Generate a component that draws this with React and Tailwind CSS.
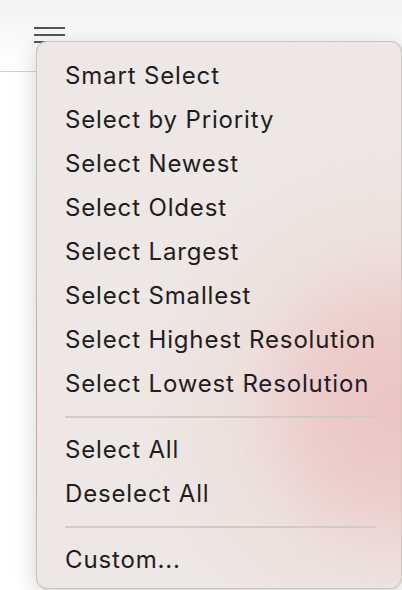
const items1 = [
  'Smart Select',
  'Select by Priority',
  'Select Newest',
  'Select Oldest',
  'Select Largest',
  'Select Smallest',
  'Select Highest Resolution',
  'Select Lowest Resolution',
]

const items2 = ['Select All', 'Deselect All']

function Item({ label }) {
  return (
    <div className="h-[44px] flex items-center px-[28px] text-[24px] text-[#1f1d1d] tracking-[0.85px] leading-none whitespace-nowrap">
      {label}
    </div>
  )
}

function Separator() {
  return (
    <div className="h-[22px] flex items-center pl-[28px] pr-[25px]">
      <div className="h-[2px] w-full bg-[#d4c9c7]" />
    </div>
  )
}

export default function App() {
  return (
    <div className="relative w-[402px] h-[590px] overflow-hidden bg-white" style={{ fontFamily: 'Inter, "Noto Sans", sans-serif' }}>
      <div className="h-[72px] border-b border-[#d2d2d2] bg-gradient-to-b from-[#f3f3f3] to-white">
        <div className="pl-[34px] pt-[27px] flex flex-col gap-[5px]">
          <div className="h-[2px] w-[31px] bg-[#555]" />
          <div className="h-[2px] w-[31px] bg-[#555]" />
          <div className="h-[2px] w-[31px] bg-[#555]" />
        </div>
      </div>

      <div className="absolute left-[36px] top-[41px] w-[366px] h-[548px] rounded-[11px] border border-black/15 bg-[#ede8e5] bg-[radial-gradient(ellipse_72%_50%_at_98%_67%,rgba(235,196,196,1)_0%,rgba(236,200,199,0.85)_30%,rgba(237,216,214,0.45)_62%,rgba(237,232,229,0)_100%)] shadow-[0_6px_24px_rgba(0,0,0,0.18)] pt-[12px]">
        {items1.map(l => <Item key={l} label={l} />)}
        <Separator />
        {items2.map(l => <Item key={l} label={l} />)}
        <Separator />
        <Item label="Custom..." />
      </div>
    </div>
  )
}
